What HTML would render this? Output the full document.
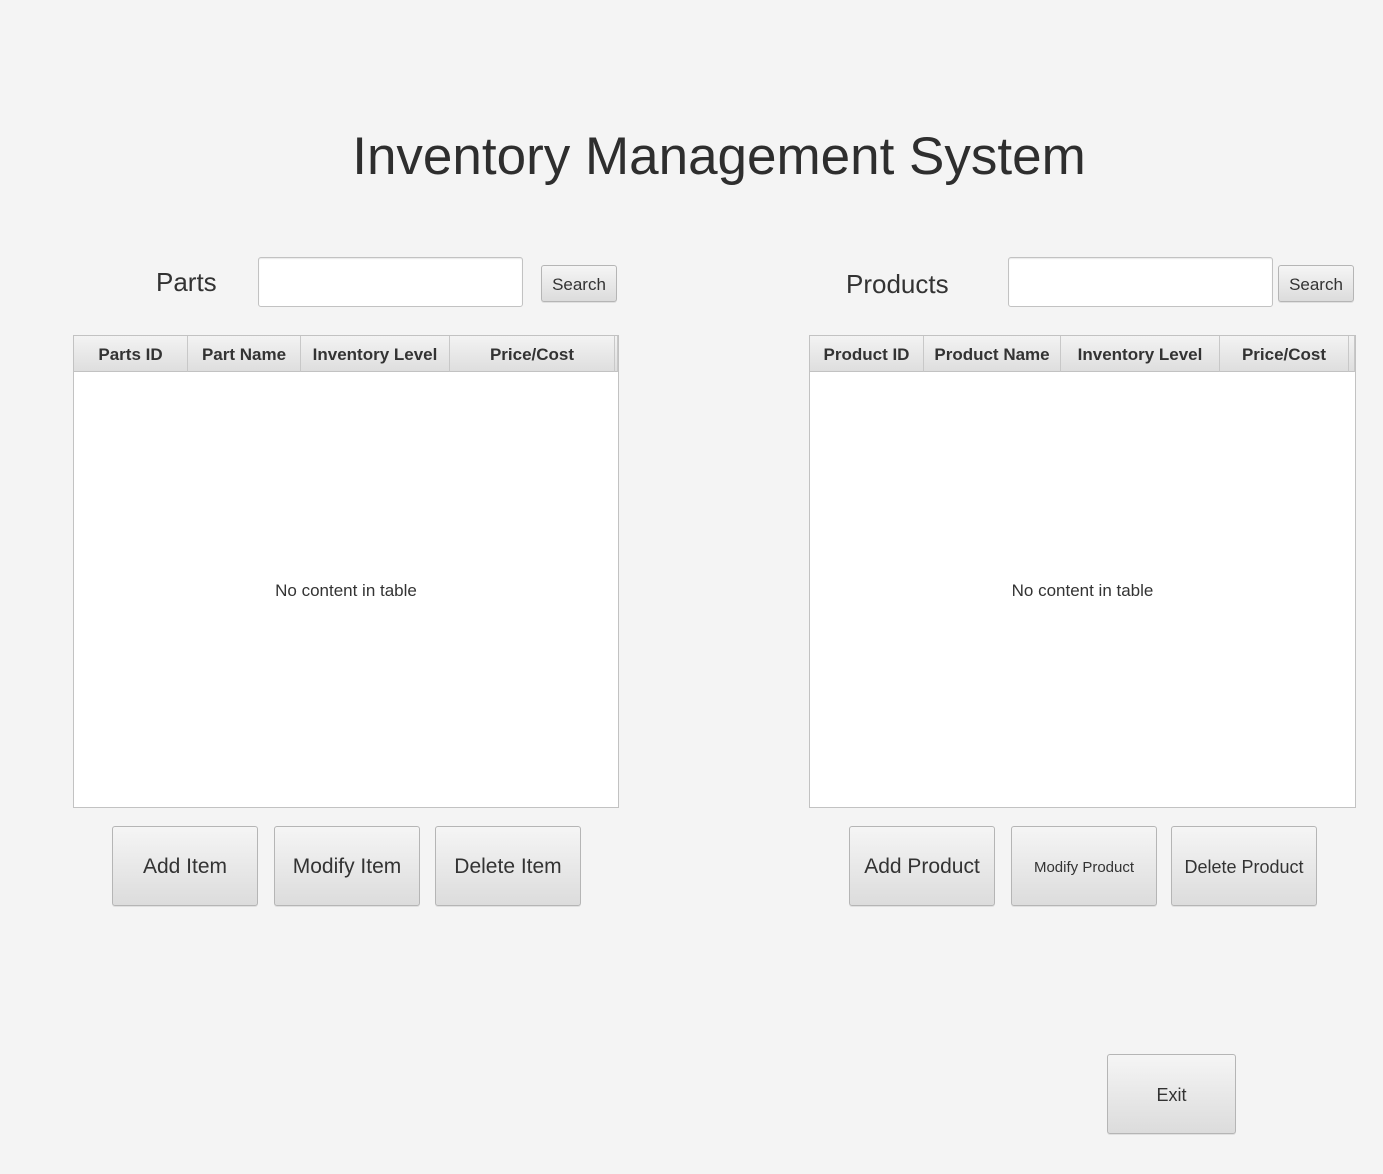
<!DOCTYPE html>
<html><head><style>
body{margin:0;width:1383px;height:1174px;background:#f4f4f4;font-family:"Liberation Sans",sans-serif;color:#333;position:relative;overflow:hidden}
.t{position:absolute;white-space:nowrap}
.fld{position:absolute;background:#fff;border:1px solid #c2c2c2;border-radius:3px;box-sizing:border-box;box-shadow:inset 0 1px 1px #e8e8e8}
.btn{position:absolute;box-sizing:border-box;border:1px solid #b5b5b5;border-radius:3px;background:linear-gradient(#f5f5f5,#dcdcdc);display:flex;align-items:center;justify-content:center;color:#333;box-shadow:0 1px 0 #e0e0e0;padding-top:2px}
.tbl{position:absolute;border:1px solid #c2c2c2;background:#fff;box-sizing:border-box}
.hd{position:absolute;top:0;height:36px;background:linear-gradient(#f3f3f3,#dedede);border-right:1px solid #c8c8c8;border-bottom:1px solid #c2c2c2;box-sizing:border-box;display:flex;align-items:center;justify-content:center;font-weight:bold;font-size:17px;color:#333;padding-top:3px}
</style></head><body>
<div class="t" style="left:0;width:1438px;text-align:center;top:126px;font-size:53px;color:#2e2e2e">Inventory Management System</div>

<div class="t" style="left:156px;top:267px;font-size:26px">Parts</div>
<div class="fld" style="left:258px;top:257px;width:265px;height:50px"></div>
<div class="btn" style="left:541px;top:265px;width:76px;height:37px;font-size:17px">Search</div>

<div class="t" style="left:846px;top:269px;font-size:26px">Products</div>
<div class="fld" style="left:1008px;top:257px;width:265px;height:50px"></div>
<div class="btn" style="left:1278px;top:265px;width:76px;height:37px;font-size:17px">Search</div>

<div class="tbl" style="left:73px;top:335px;width:546px;height:473px">
<div class="hd" style="left:0;width:114px">Parts ID</div>
<div class="hd" style="left:114px;width:113px">Part Name</div>
<div class="hd" style="left:227px;width:149px">Inventory Level</div>
<div class="hd" style="left:376px;width:165px">Price/Cost</div>
<div class="hd" style="left:541px;width:3px"></div>
<div class="t" style="left:0;width:544px;text-align:center;top:245px;font-size:17px">No content in table</div>
</div>

<div class="tbl" style="left:809px;top:335px;width:547px;height:473px">
<div class="hd" style="left:0;width:114px">Product ID</div>
<div class="hd" style="left:114px;width:137px">Product Name</div>
<div class="hd" style="left:251px;width:159px">Inventory Level</div>
<div class="hd" style="left:410px;width:129px">Price/Cost</div>
<div class="hd" style="left:539px;width:6px"></div>
<div class="t" style="left:0;width:545px;text-align:center;top:245px;font-size:17px">No content in table</div>
</div>

<div class="btn" style="left:112px;top:826px;width:146px;height:80px;font-size:21px">Add Item</div>
<div class="btn" style="left:274px;top:826px;width:146px;height:80px;font-size:21px">Modify Item</div>
<div class="btn" style="left:435px;top:826px;width:146px;height:80px;font-size:21px">Delete Item</div>

<div class="btn" style="left:849px;top:826px;width:146px;height:80px;font-size:21px">Add Product</div>
<div class="btn" style="left:1011px;top:826px;width:146px;height:80px;font-size:15px">Modify Product</div>
<div class="btn" style="left:1171px;top:826px;width:146px;height:80px;font-size:18px">Delete Product</div>

<div class="btn" style="left:1107px;top:1054px;width:129px;height:80px;font-size:18px">Exit</div>
</body></html>
